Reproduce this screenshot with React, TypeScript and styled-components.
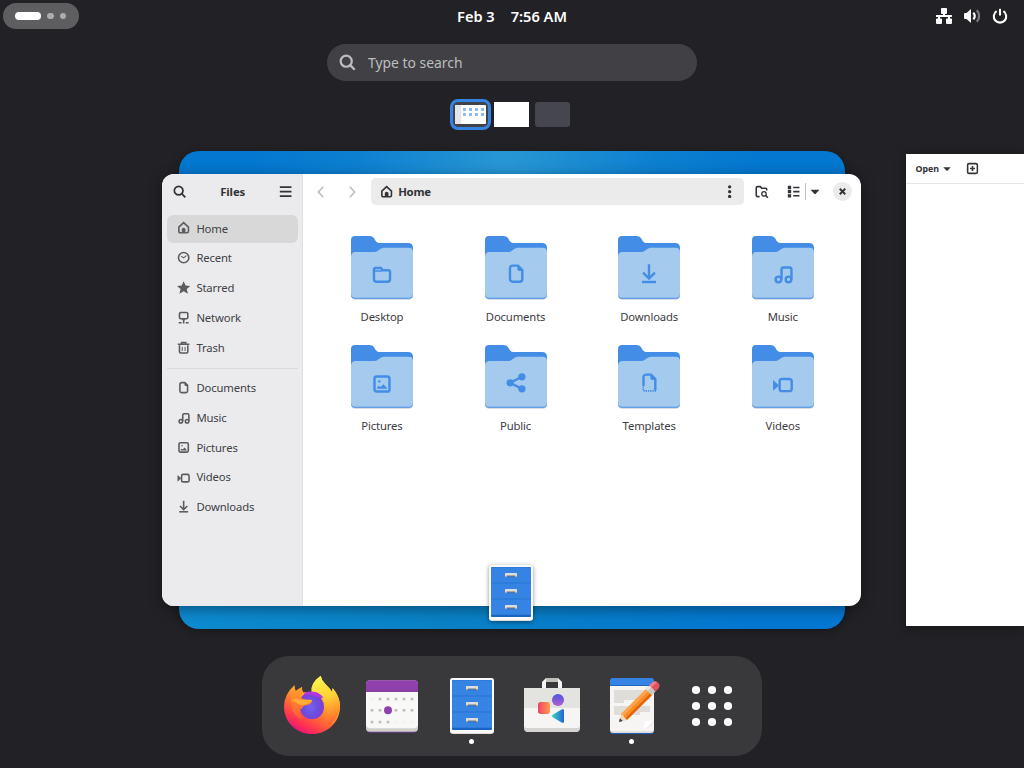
import React from 'react';
import styled, { createGlobalStyle } from 'styled-components';

const Global = createGlobalStyle`
  * { box-sizing: border-box; }
  body { margin: 0; background: #222226; overflow: hidden; }
  svg { display: block; flex: none; }
`;

const Shell = styled.div`
  width: 1024px;
  height: 768px;
  display: flex;
  flex-direction: column;
  align-items: center;
  overflow: hidden;
  background: #222226;
  color: #fff;
  font-family: 'Noto Sans', 'Open Sans', sans-serif;
`;

const TopBar = styled.header`
  width: 100%;
  height: 32px;
  flex: none;
  display: grid;
  grid-template-columns: 1fr auto 1fr;
  align-items: center;
`;

const Activities = styled.div`
  width: 76px;
  height: 26px;
  margin-left: 3px;
  border-radius: 13px;
  background: #5e5e60;
  display: flex;
  align-items: center;
  gap: 6px;
  padding-left: 12px;
`;

const Pill = styled.span`
  width: 26px;
  height: 8px;
  border-radius: 4px;
  background: #fff;
`;

const Dot = styled.span`
  width: 6.5px;
  height: 6.5px;
  border-radius: 50%;
  background: #adadaf;
`;

const Clock = styled.div`
  display: flex;
  gap: 16px;
  font-size: 14.6px;
  font-weight: 600;
  line-height: 20px;
`;

const Tray = styled.div`
  display: flex;
  justify-content: flex-end;
  gap: 12px;
  padding-right: 16px;
`;

const Search = styled.div`
  width: 370px;
  height: 37px;
  flex: none;
  margin-top: 12px;
  border-radius: 18.5px;
  background: #414145;
  display: flex;
  align-items: center;
  gap: 12px;
  padding-left: 12px;
  color: #bdbdbf;
  font-size: 13.9px;
`;

const Thumbs = styled.div`
  height: 31px;
  flex: none;
  margin-top: 18px;
  display: flex;
  align-items: center;
  margin-right: 4px;
`;

const ActiveThumb = styled.div`
  width: 41px;
  height: 31px;
  border: 3px solid #3584e4;
  border-radius: 8px;
  background: #424249;
  display: flex;
  align-items: center;
  justify-content: center;
`;

const MiniWindow = styled.div`
  width: 31px;
  height: 19px;
  background: #fff;
  display: flex;
  border-radius: 1px;
  overflow: hidden;
`;

const MiniSide = styled.div`
  width: 6px;
  background: #e4e4e8;
`;

const MiniGrid = styled.div`
  display: grid;
  grid-template-columns: repeat(4, 3px);
  grid-auto-rows: 3px;
  gap: 1.5px 3px;
  padding: 3px 2px;
`;

const MiniFolder = styled.span`
  background: #8fbcec;
`;

const Thumb = styled.div<{ $white?: boolean }>`
  width: 35px;
  height: 25px;
  margin-left: ${p => (p.$white ? 3 : 6)}px;
  border-radius: ${p => (p.$white ? 0 : 3)}px;
  background: ${p => (p.$white ? '#fff' : '#45464e')};
`;

const Stage = styled.main`
  position: relative;
  width: 1024px;
  height: 478px;
  flex: none;
  margin-top: 21px;
`;

const Wallpaper = styled.div`
  width: 666px;
  height: 478px;
  margin-left: 179px;
  border-radius: 20px;
  box-shadow: 0 2px 10px rgba(0, 0, 0, 0.35);
  background:
    radial-gradient(ellipse 250px 200px at 49% 10px, #2897d4, rgba(20, 134, 208, 0.55) 60%, transparent),
    linear-gradient(90deg, rgba(14, 140, 208, 0.9), rgba(10, 130, 196, 0.9) 40%, transparent 85%) 0 100% / 100% 60px no-repeat,
    #0477d0;
`;

const FilesWindow = styled.section`
  position: absolute;
  left: 162px;
  top: 23px;
  width: 699px;
  height: 432px;
  display: flex;
  border-radius: 12px;
  background: #fff;
  color: #333338;
  overflow: hidden;
`;

const WindowShadow = styled.div`
  position: absolute;
  left: 162px;
  top: 23px;
  width: 699px;
  height: 432px;
  border-radius: 12px;
  box-shadow: 0 3px 14px rgba(0, 0, 0, 0.4);
`;

const Sidebar = styled.aside`
  width: 141.4px;
  flex: none;
  background: #ebebed;
  border-right: 1px solid #e0e0e2;
`;

const SideHead = styled.div`
  height: 35px;
  display: flex;
  align-items: center;
  justify-content: space-between;
  padding: 0 10px 0 11px;
  font-size: 11.4px;
  letter-spacing: -0.1px;
  font-weight: 700;
`;

const SideList = styled.nav`
  display: flex;
  flex-direction: column;
  gap: 1.85px;
  padding: 5.7px 4px 0 5px;
`;

const SideItem = styled.div<{ $active?: boolean }>`
  height: 28px;
  border-radius: 6px;
  display: flex;
  align-items: center;
  gap: 6.1px;
  padding: 0 0 1.2px 10px;
  font-size: 11.3px;
  letter-spacing: -0.15px;
  color: #414146;
  background: ${p => (p.$active ? '#d8d8d9' : 'transparent')};
  svg { color: #5c5c60; }
`;

const Separator = styled.hr`
  width: 100%;
  height: 1.5px;
  border: 0;
  margin: 4px 0 2.8px;
  background: #dadadc;
`;

const Content = styled.div`
  flex: 1;
`;

const Toolbar = styled.div`
  height: 35px;
  display: flex;
  align-items: center;
  padding-left: 11px;
`;

const NavButtons = styled.div`
  display: flex;
  gap: 17px;
  color: #bdbdbf;
`;

const PathBar = styled.div`
  width: 373px;
  height: 27px;
  margin-left: 11.5px;
  border-radius: 5px;
  background: #ebebeb;
  display: flex;
  align-items: center;
  font-size: 11.4px;
  letter-spacing: -0.3px;
  font-weight: 700;
  padding: 0 8px 0 9.5px;
`;

const PathName = styled.span`
  flex: 1;
  padding-left: 4.5px;
`;

const Tools = styled.div`
  display: flex;
  align-items: center;
  margin-left: 11.5px;
`;

const ViewSwitch = styled.div`
  display: flex;
  align-items: center;
  gap: 5.5px;
  margin: 0 11.5px 0 18px;
`;

const Divider = styled.span`
  width: 1px;
  height: 17px;
  margin-right: -2.5px;
  background: #c0c0c2;
`;

const CloseButton = styled.div`
  width: 19px;
  height: 19px;
  border-radius: 50%;
  background: #ebebeb;
  display: flex;
  align-items: center;
  justify-content: center;
`;

const FolderGrid = styled.div`
  display: grid;
  grid-template-columns: repeat(4, 133.6px);
  grid-auto-rows: 109px;
  padding: 27px 0 0 11.8px;
`;

const FolderCell = styled.div`
  display: flex;
  flex-direction: column;
  align-items: center;
  gap: 8px;
  font-size: 11.3px;
  letter-spacing: -0.15px;
  line-height: 18px;
  color: #3d3d42;
`;

const WindowIcon = styled.div`
  position: absolute;
  left: 479px;
  top: 410px;
  filter: drop-shadow(0 1px 2px rgba(0, 0, 0, 0.45));
`;

const EditorWindow = styled.section`
  position: absolute;
  left: 906px;
  top: 3px;
  width: 118px;
  height: 472px;
  background: #fff;
  box-shadow: 0 2px 10px rgba(0, 0, 0, 0.35);
`;

const EditorHead = styled.div`
  height: 30px;
  border-bottom: 1px solid #e6e6e7;
  display: flex;
  align-items: center;
  padding-left: 9.5px;
  color: #333338;
  font-size: 8.8px;
  font-weight: 700;
`;

const OpenButton = styled.div`
  display: flex;
  align-items: center;
  gap: 3px;
  margin-right: 13.5px;
`;

const Dash = styled.footer`
  width: 500px;
  height: 100px;
  flex: none;
  margin-top: 27px;
  border-radius: 27px;
  background: #39393b;
  display: flex;
  padding: 18px 10px 0;
`;

const DashItem = styled.div`
  width: 80px;
  display: flex;
  flex-direction: column;
  align-items: center;
`;

const Running = styled.span`
  width: 5px;
  height: 5px;
  margin: 1px 1px 0 0;
  border-radius: 50%;
  background: #fff;
`;

const glyphs: Record<string, React.ReactNode> = {
  home: <><path d="M2.2 12.4V7.3L8 1.9l5.8 5.4v5.1q0 1.7-1.7 1.7H3.9q-1.7 0-1.7-1.7z" /><path d="M5.8 14v-3.7a2.2 2.2 0 0 1 4.4 0V14z" fill="currentColor" stroke="none" /></>,
  recent: <><circle cx="8" cy="8" r="6.2" /><path d="M5 6.3l3 2 3.3-2.8" strokeWidth="1.3" /></>,
  star: <path fill="currentColor" stroke="none" d="M8 .2l2.3 5.3 5.7.5-4.3 3.7 1.4 5.7L8 12.4l-5.1 3 1.4-5.7L0 6l5.7-.5z" />,
  network: <><rect x="3" y="1.8" width="10" height="7.6" rx="1.5" /><path d="M8 9.5v4M2 14.2h3.5M7 14.2h2M10.5 14.2H14" /><path d="M5 8.8h6l-3 3.4z" fill="currentColor" stroke="none" /></>,
  trash: <><path d="M3 5v8q0 1.5 1.5 1.5h7q1.5 0 1.5-1.5V5M1 4h14M5.5 3.5V1.8h5v1.7" /><path d="M6.3 7v5M9.7 7v5" strokeWidth="1.2" /></>,
  document: <><path d="M5.5 2H9.5l3.2 3.2V12a2 2 0 0 1-2 2H5.5a2 2 0 0 1-2-2V4a2 2 0 0 1 2-2z" /><path d="M9 1.5v3q0 1.5 1.5 1.5h3z" fill="currentColor" stroke="none" /></>,
  template: <><path d="M3.9 10.5V4a2 2 0 0 1 2-2H9.5l3.2 3.2V13.4" /><path d="M3.7 10.8v3.3h9V12" strokeDasharray="1 .7" strokeWidth="1.2" /><path d="M9 1.5v3q0 1.5 1.5 1.5h3z" fill="currentColor" stroke="none" /></>,
  music: <><circle cx="4.6" cy="12.3" r="2.1" /><circle cx="12.1" cy="12.3" r="2.1" /><path d="M6.9 12.3V5q0-1.6 1.6-1.6h4.2q1.6 0 1.6 1.6v7.3" /></>,
  pictures: <><rect x="2.4" y="3.4" width="11.2" height="11.2" rx="1.6" /><circle cx="6" cy="7" r=".9" fill="currentColor" stroke="none" /><path d="M4.4 12.5v-1.4l1.6-.6 1 .8 2-2.2 2.6 2.6v.8z" fill="currentColor" stroke="none" /></>,
  videos: <><rect x="5.5" y="5.3" width="9" height="9" rx="1.8" /><path d="M.6 6l4.4 4-4.4 4z" fill="currentColor" stroke="none" /></>,
  download: <><path d="M8 1v10.2M3.6 7.2L8 11.6l4.4-4.4" /><path d="M2.7 14.2h10.6" /></>,
  folder: <><path d="M2 12V5q0-1.2 1.2-1.2h4L8.6 5.4h4Q14 5.4 14 6.8V12q0 2-2 2H4q-2 0-2-2z" /><path d="M2 6h5.5l1-.8" strokeWidth="1.2" /></>,
  share: <><path d="M12.4 3.6L3.6 8.1l8.8 4.5" /><g fill="currentColor" stroke="none"><circle cx="3.6" cy="8.1" r="2.7" /><circle cx="12.4" cy="3.6" r="2.7" /><circle cx="12.4" cy="12.6" r="2.7" /></g></>,
  search: <><circle cx="6.8" cy="6.8" r="5.2" strokeWidth="2.1" /><path d="M10.5 10.5l4.3 4.3" strokeWidth="2.2" /></>,
  menu: <path d="M1 2.6h14M1 8h14M1 13.4h14" strokeWidth="2.1" />,
  back: <path d="M10.5 2L5 8l5.5 6" />,
  forward: <path d="M5.5 2L11 8l-5.5 6" />,
  more: <g fill="currentColor" stroke="none"><circle cx="8" cy="2.2" r="2" /><circle cx="8" cy="8" r="2" /><circle cx="8" cy="13.8" r="2" /></g>,
  folderSearch: <><path d="M5.5 14H3.5Q1.5 14 1.5 12V3.5Q1.5 2 3 2h3.5L8 4h4.5q1.7 0 1.7 1.7V6.5" /><circle cx="10.8" cy="10.6" r="2.7" strokeWidth="1.6" /><path d="M12.8 12.6l2.7 2.7" /></>,
  list: <><path d="M7.5 3H15M7.5 8H15M7.5 13H15" /><path d="M1 1h4v4H1zM1 6h4v4H1zM1 11h4v4H1z" fill="currentColor" stroke="none" /></>,
  down: <path d="M2 5h12l-5 5.4q-1 1-2 0z" fill="currentColor" stroke="none" />,
  close: <path d="M4 4l8 8M12 4l-8 8" strokeWidth="2.8" />,
  newTab: <><rect x="2" y="2" width="12" height="12" rx="1.8" /><path d="M8 5v6M5 8h6" /></>,
  wired: <g fill="currentColor" stroke="none"><path d="M5 1q0-1 1-1h4q1 0 1 1v4q0 1-1 1H9v1h6.9v2H14v1.5h1q1 0 1 1V15q0 1-1 1h-4q-1 0-1-1v-3.5q0-1 1-1h1V9H4v1.5h1q1 0 1 1V15q0 1-1 1H1q-1 0-1-1v-3.5q0-1 1-1h1V9H0V7h7V6H6Q5 6 5 5z" /></g>,
  volume: <><path d="M0 6q0-1 1-1h1.5L7 1v14l-4.5-4H1q-1 0-1-1z" fill="currentColor" stroke="none" /><path d="M9.3 4.6q2.9 3.4 0 6.8" strokeWidth="2.2" /><path d="M12.8 2.2q4.6 5.8 0 11.6" strokeWidth="2.2" opacity=".4" /></>,
  power: <><path d="M4.6 3.2a6.2 6.2 0 1 0 6.8 0" strokeWidth="2.1" /><path d="M8 .8v6.7" strokeWidth="2.1" /></>,
};

const Glyph = ({ name, size = 13.3 }: { name: string; size?: number }) => (
  <svg width={size} height={size} viewBox="0 0 16 16" fill="none" stroke="currentColor" strokeWidth={1.9}>
    {glyphs[name]}
  </svg>
);

const Folder = ({ emblem }: { emblem: string }) => (
  <svg width="62" height="64" viewBox="0 0 185 191">
    <path d="M1 170v8q0 12 12 12h159q12 0 12-12v-8z" fill="#8d9bb0" opacity=".45" />
    <path d="M0 12Q0 0 12 0h44q10 0 14 8 6 13 14 13h86q15 0 15 15v140q0 11-12 11H12Q0 187 0 176z" fill="#438de6" />
    <path d="M0 60q1-11 12-12h56q8 0 13-5 9-8 17-8h74q13 0 13 13v124q0 12-12 12H12Q0 184 0 172z" fill="#a4caee" />
    <g transform="translate(60.5 80.5) scale(4)" color="#438de6" fill="none" stroke="#438de6" strokeWidth="1.8">
      {glyphs[emblem]}
    </g>
  </svg>
);

const Firefox = () => (
  <svg width="64" height="64" viewBox="75 72 192 192">
    <defs>
      <linearGradient id="ffBody" x1=".8" y1=".1" x2=".3" y2="1">
        <stop offset="0" stopColor="#fff04a" /><stop offset=".35" stopColor="#ffb42a" />
        <stop offset=".62" stopColor="#ff6b33" /><stop offset=".85" stopColor="#ff2f55" /><stop offset="1" stopColor="#e5127c" />
      </linearGradient>
      <linearGradient id="ffTail" x1=".4" y1="0" x2=".6" y2="1">
        <stop offset="0" stopColor="#fff44f" /><stop offset=".45" stopColor="#ffcf34" /><stop offset=".8" stopColor="#ff8b2c" /><stop offset="1" stopColor="#ff5a3a" />
      </linearGradient>
      <radialGradient id="ffGlobe" cx=".45" cy=".55" r=".6">
        <stop offset="0" stopColor="#7760f4" /><stop offset=".5" stopColor="#6b4fdc" /><stop offset="1" stopColor="#8a35d8" />
      </radialGradient>
      <linearGradient id="ffHead" x1="0" y1="0" x2="0" y2="1">
        <stop offset="0" stopColor="#ffa52a" /><stop offset="1" stopColor="#ff5a3a" />
      </linearGradient>
    </defs>
    <path d="M119 105q-1 10 3 19 8-8 19-13-1 9 3 16h26q-4-28 27-49 2 13 15 26 14 13 19 22 1-5 2-11 22 26 22 55c0 46-38 82-84 82s-84-36-84-82q0-37 32-65z" fill="url(#ffBody)" />
    <path d="M170 126q-4-28 27-49 2 13 15 26 14 13 19 22 1-5 2-11 22 26 22 55-4 42-44 58 10-34 1-66-7-26-42-35z" fill="url(#ffTail)" />
    <path d="M135 155q4-22 25-29 26-4 40 12l-1 8q8 10 8 26a36 36 0 0 1-72 0z" fill="url(#ffGlobe)" />
    <path d="M148 128q36-12 59 16l-18-3q-14-9-41-6z" fill="#b833e1" />
    <path d="M119 105q-1 10 3 19 8-8 19-13-1 9 3 16-8 4-10 12 6 10 24 10 11 0 14 4-3 9-14 12-10 0-15 7-7 12-8 3-3 22 9 34-30-8-36-47-4-24 11-48z" fill="url(#ffHead)" />
    <path d="M110 151q12-8 25-2 11 2 30 0 8 1 5 5-8 8-19 10-18 3-25-5-8-6-16-8z" fill="#ffad35" />
  </svg>
);

const Calendar = () => {
  const dots = [[375, 147], [399, 147], [423, 147], [447, 147], [471, 147], [351, 181], [375, 181], [423, 181], [447, 181], [471, 181], [351, 216], [375, 216], [399, 216]];
  const faded = [[351, 147], [423, 216], [447, 216], [471, 216]];
  return (
    <svg width="64" height="64" viewBox="315 72 192 192">
      <rect x="333" y="96" width="156" height="152" rx="11" fill="#6b3a86" />
      <rect x="333" y="91" width="156" height="154" rx="11" fill="#d0d0cd" />
      <path d="M333 124h156v98q0 11-11 13H344q-11-2-11-13z" fill="#f8f8f7" />
      <path d="M333 125v-23q0-11 11-11h134q11 0 11 11v23z" fill="#9141ac" />
      <path d="M333 122h156v3H333z" fill="#7b3494" />
      {dots.map(([x, y]) => <circle key={`${x}-${y}`} cx={x} cy={y} r="4.6" fill="#c0bfbc" />)}
      {faded.map(([x, y]) => <circle key={`${x}-${y}`} cx={x} cy={y} r="4.6" fill="#f1f1f0" />)}
      <circle cx="399" cy="181" r="12" fill="#9141ac" />
    </svg>
  );
};

const Cabinet = () => (
  <svg width="64" height="64" viewBox="30 72 192 192">
    <rect x="60" y="84" width="132" height="168" rx="9" fill="#deddda" />
    <rect x="60" y="84" width="132" height="165" rx="9" fill="#fafafa" />
    <rect x="66" y="90" width="120" height="150" rx="3" fill="#1a65c4" />
    {[0, 1, 2].map(i => (
      <g key={i} transform={`translate(0 ${i * 48})`}>
        <path d="M66 91h120v46H66z" fill="#3584e4" />
        <path d="M111 114h30v7h-30z" fill="#2d6fc4" />
        <path d="M110 108h32q2 0 2 2v10h-5v-3h-26v3h-5v-10q0-2 2-2z" fill="#deddda" />
        <path d="M113 115h26v3h-26zM108 118h5v3h-5zM139 118h5v3h-5z" fill="#9a9996" />
      </g>
    ))}
  </svg>
);

const Software = () => (
  <svg width="64" height="64" viewBox="270 72 192 192">
    <defs>
      <linearGradient id="swRed"><stop stopColor="#f0406c" /><stop offset="1" stopColor="#ff9c4a" /></linearGradient>
      <linearGradient id="swPurple" x2="0" y2="1"><stop stopColor="#4c54e0" /><stop offset="1" stopColor="#b25fd3" /></linearGradient>
      <linearGradient id="swTeal"><stop stopColor="#38dcb8" /><stop offset="1" stopColor="#2460d8" /></linearGradient>
    </defs>
    <path d="M336 114V96l12-12h36l12 12v18h-12V96h-36v18z" fill="#f6f5f4" />
    <path d="M348 84h36v12h-36z" fill="#c0bfbc" />
    <path d="M282 114h168v121q0 11-11 11H293q-11 0-11-11z" fill="#d5d4d2" />
    <path d="M282 114h168v112q0 8-8 8H290q-8 0-8-8z" fill="#f6f5f4" />
    <path d="M282 114h168v60H282z" fill="#e3e3e0" />
    <rect x="324" y="156" width="36" height="36" rx="8" fill="url(#swRed)" />
    <circle cx="384" cy="150" r="18" fill="url(#swPurple)" />
    <path d="M402 181v34q0 5-6 3l-28-16q-5-4 0-8l28-16q6-2 6 3z" fill="url(#swTeal)" />
  </svg>
);

const Editor = () => (
  <svg width="64" height="64" viewBox="30 72 192 192">
    <rect x="60" y="84" width="132" height="168" rx="10" fill="#1c5fb8" />
    <path d="M60 100h132v140q0 9-9 9H69q-9 0-9-9z" fill="#deddda" />
    <path d="M60 107h132v128q0 9-9 9H69q-9 0-9-9z" fill="#f6f5f4" />
    <path d="M60 107V94q0-10 10-10h112q10 0 10 10v13z" fill="#3584e4" />
    <path d="M60 105h132v3H60z" fill="#1f66c4" />
    <path d="M72 120h108v30h-78v9H72zM72 168h108v18h-30v9H72z" fill="#deddda" />
    <path d="M162 243v-17q0-14 14-14h15v3z" fill="#fff" />
    <path d="M162 243l30-30" stroke="#deddda" strokeWidth="2" />
    <g transform="translate(87 216) rotate(-45)">
      <path d="M0 0l21-13v26z" fill="#efd9bd" />
      <path d="M0 0l10-6v12z" fill="#3d3846" />
      <path d="M21-13h106v9H21z" fill="#ffa348" />
      <path d="M21-4h106v9H21z" fill="#ff8a1f" />
      <path d="M21 5h106v8H21z" fill="#e66100" />
      <path d="M127-13h15v26h-15z" fill="#c9c8c6" />
      <path d="M127-13h15v8h-15z" fill="#e8e7e5" />
      <path d="M142-13h11q13 0 13 13t-13 13h-11z" fill="#e0535c" />
      <path d="M142-13h11q10 0 13 9h-24z" fill="#ee8087" />
    </g>
  </svg>
);

const AppGrid = () => (
  <svg width="64" height="64" viewBox="0 0 64 64" fill="#fff">
    {[16, 32, 48].map(y => [16, 32, 48].map(x => <circle key={`${x}-${y}`} cx={x} cy={y} r="4.1" />))}
  </svg>
);

const places = [['Home', 'home'], ['Recent', 'recent'], ['Starred', 'star'], ['Network', 'network'], ['Trash', 'trash']];
const bookmarks = [['Documents', 'document'], ['Music', 'music'], ['Pictures', 'pictures'], ['Videos', 'videos'], ['Downloads', 'download']];
const folders = [['Desktop', 'folder'], ['Documents', 'document'], ['Downloads', 'download'], ['Music', 'music'], ['Pictures', 'pictures'], ['Public', 'share'], ['Templates', 'template'], ['Videos', 'videos']];

export default function App() {
  return (
    <Shell>
      <Global />
      <TopBar>
        <Activities><Pill /><Dot /><Dot /></Activities>
        <Clock><span>Feb 3</span><span>7:56 AM</span></Clock>
        <Tray><Glyph name="wired" size={16} /><Glyph name="volume" size={16} /><Glyph name="power" size={16} /></Tray>
      </TopBar>
      <Search><Glyph name="search" size={17} />Type to search</Search>
      <Thumbs>
        <ActiveThumb>
          <MiniWindow>
            <MiniSide />
            <MiniGrid>{folders.map(([label]) => <MiniFolder key={label} />)}</MiniGrid>
          </MiniWindow>
        </ActiveThumb>
        <Thumb $white />
        <Thumb />
      </Thumbs>
      <Stage>
        <Wallpaper />
        <WindowShadow />
        <FilesWindow>
          <Sidebar>
            <SideHead><Glyph name="search" /><span>Files</span><Glyph name="menu" /></SideHead>
            <SideList>
              {places.map(([label, icon]) => (
                <SideItem key={label} $active={label === 'Home'}><Glyph name={icon} />{label}</SideItem>
              ))}
              <Separator />
              {bookmarks.map(([label, icon]) => (
                <SideItem key={label}><Glyph name={icon} />{label}</SideItem>
              ))}
            </SideList>
          </Sidebar>
          <Content>
            <Toolbar>
              <NavButtons><Glyph name="back" size={14} /><Glyph name="forward" size={14} /></NavButtons>
              <PathBar><Glyph name="home" /><PathName>Home</PathName><Glyph name="more" /></PathBar>
              <Tools>
                <Glyph name="folderSearch" />
                <ViewSwitch><Glyph name="list" /><Divider /><Glyph name="down" size={12} /></ViewSwitch>
                <CloseButton><Glyph name="close" size={11} /></CloseButton>
              </Tools>
            </Toolbar>
            <FolderGrid>
              {folders.map(([label, icon]) => (
                <FolderCell key={label}><Folder emblem={icon} />{label}</FolderCell>
              ))}
            </FolderGrid>
          </Content>
        </FilesWindow>
        <WindowIcon><Cabinet /></WindowIcon>
        <EditorWindow>
          <EditorHead>
            <OpenButton>Open<Glyph name="down" size={10} /></OpenButton>
            <Glyph name="newTab" size={13} />
          </EditorHead>
        </EditorWindow>
      </Stage>
      <Dash>
        <DashItem><Firefox /></DashItem>
        <DashItem><Calendar /></DashItem>
        <DashItem><Cabinet /><Running /></DashItem>
        <DashItem><Software /></DashItem>
        <DashItem><Editor /><Running /></DashItem>
        <DashItem><AppGrid /></DashItem>
      </Dash>
    </Shell>
  );
}
